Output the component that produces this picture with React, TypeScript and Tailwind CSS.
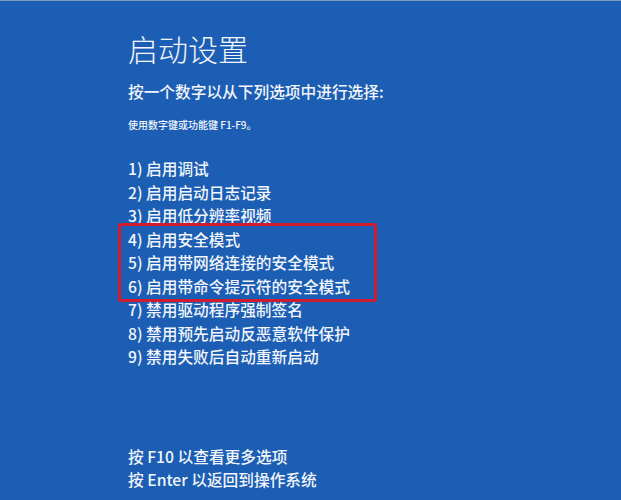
import React from 'react';

const items = [
    '1) 启用调试',
    '2) 启用启动日志记录',
    '3) 启用低分辨率视频',
    '4) 启用安全模式',
    '5) 启用带网络连接的安全模式',
    '6) 启用带命令提示符的安全模式',
    '7) 禁用驱动程序强制签名',
    '8) 禁用预先启动反恶意软件保护',
    '9) 禁用失败后自动重新启动',
];

const font = { fontFamily: '"Noto Sans CJK SC", "Noto Sans", sans-serif' };

const Item: React.FC<{ text: string }> = ({ text }) => (
    <div className="h-[23.5px] leading-[23.5px] text-[15.7px] font-medium whitespace-nowrap">{text}</div>
);

const App: React.FC = () => {
    return (
        <div className="w-[621px] h-[500px] bg-[#1b5eb3] border-t border-[#7c9cc4] text-[#f2f5fa] overflow-hidden" style={font}>
            <div className="pl-[128px] pt-[29px] flex flex-col">
                <h1 className="text-[30px] leading-[36px] font-light">启动设置</h1>
                <p className="mt-[14px] text-[15.7px] leading-[24px] font-medium">按一个数字以从下列选项中进行选择:</p>
                <p className="mt-[14px] text-[10px] leading-[14px] font-medium">使用数字键或功能键 F1-F9。</p>

                <div className="mt-[25px] flex flex-col">
                    {items.slice(0, 3).map(t => <Item key={t} text={t} />)}
                    <div className="-ml-[10px] pl-[7px] -mt-[5px] -mb-[4px] pt-[2px] py-[1px] w-[259px] border-[3px] border-[#d01c2e] rounded-[3px]">
                        {items.slice(3, 6).map(t => <Item key={t} text={t} />)}
                    </div>
                    {items.slice(6).map(t => <Item key={t} text={t} />)}
                </div>

                <div className="mt-[76px] flex flex-col">
                    <div className="h-[23px] leading-[23px] text-[15.7px] font-medium">按 F10 以查看更多选项</div>
                    <div className="h-[23px] leading-[23px] text-[15.7px] font-medium">按 Enter 以返回到操作系统</div>
                </div>
            </div>
        </div>
    );
};

export default App;
